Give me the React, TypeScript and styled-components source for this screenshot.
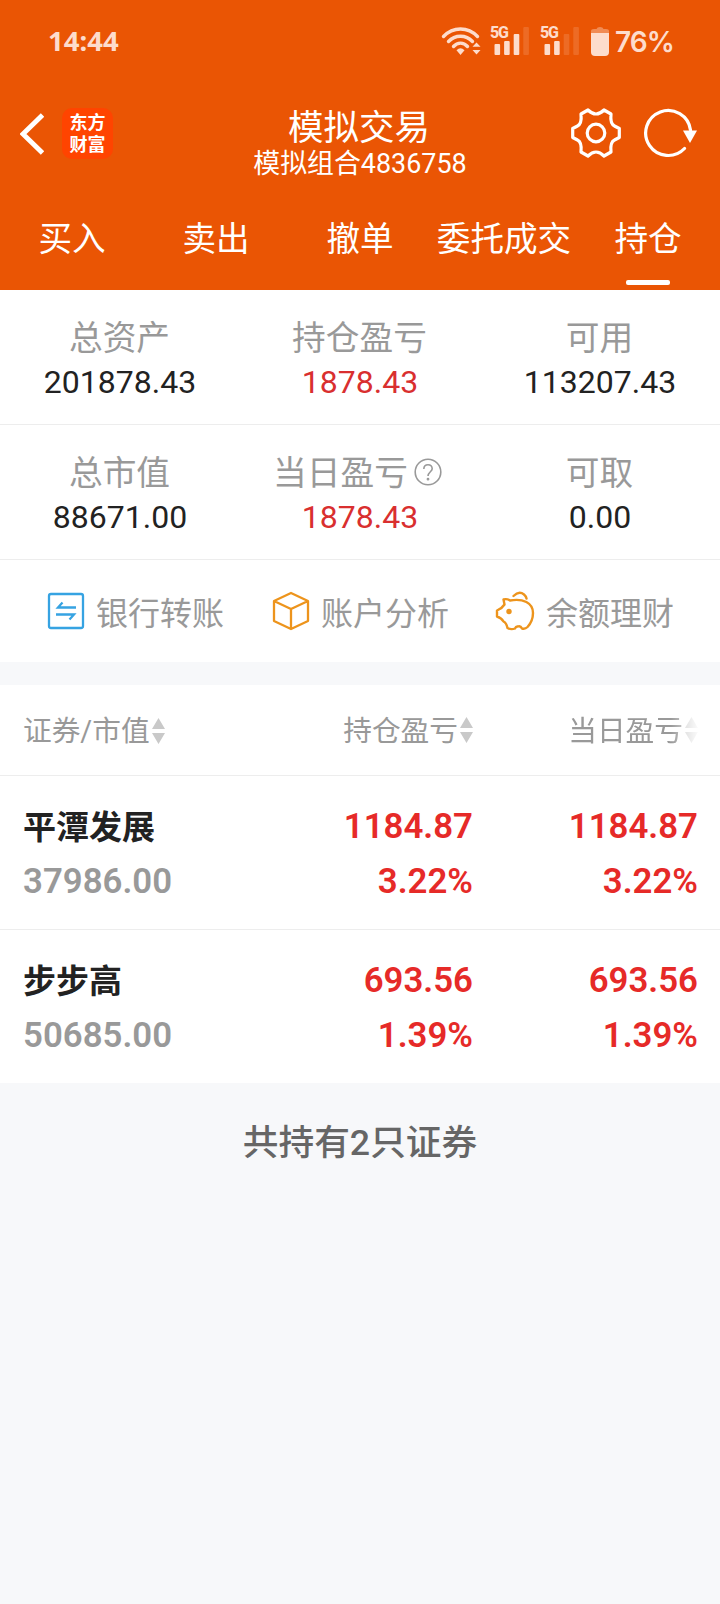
import React from "react";
import styled, { createGlobalStyle } from "styled-components";

const Global = createGlobalStyle`
  * { box-sizing: border-box; }
  body { margin: 0; background: #f7f8fa; font-family: Roboto, "Noto Sans CJK SC", sans-serif; }
`;

const ORANGE = "#ea5504";
const RED = "#e62a28";
const GREY = "#999999";
const PALE = "#fddccc";
const LINE = "#ededed";

const Screen = styled.div`
  width: 720px;
  min-height: 1604px;
  background: #f7f8fa;
  color: #222;
`;
const Top = styled.header`
  height: 290px;
  background: ${ORANGE};
  color: #fff;
  display: flex;
  flex-direction: column;
`;
const StatusBar = styled.div`
  height: 82px;
  padding: 0 47px 0 48px;
  display: flex;
  align-items: center;
  color: ${PALE};
`;
const Clock = styled.span`
  font: 700 27.5px/40px "Noto Sans", sans-serif;
  margin-right: auto;
`;
const Percent = styled.span`
  font: 600 28px/40px Inter, sans-serif;
  letter-spacing: -0.9px;
  width: 58px;
  padding-top: 2px;
  white-space: nowrap;
`;
const TitleBar = styled.div`
  height: 104px;
  display: grid;
  grid-template-columns: 200px 1fr 200px;
`;
const LeftTools = styled.div`
  display: flex;
  align-items: center;
  height: 103px;
  padding-left: 20px;
  gap: 18px;
`;
const RightTools = styled.div`
  display: flex;
  align-items: center;
  justify-content: flex-end;
  height: 102px;
  padding-right: 22px;
  gap: 23px;
`;
const Logo = styled.div`
  width: 51px;
  height: 51px;
  border-radius: 10px;
  background: #ff4400;
  display: flex;
  flex-direction: column;
  align-items: center;
  justify-content: center;
  font: 700 18px/22px Roboto, "Noto Sans CJK SC", sans-serif;
`;
const Titles = styled.div`
  display: flex;
  flex-direction: column;
  align-items: center;
  padding-top: 23px;
`;
const Title = styled.h1`
  margin: 0 2px 0 0;
  font-size: 35.5px;
  font-weight: 400;
  line-height: 46px;
`;
const Subtitle = styled.div`
  font-size: 26.9px;
  line-height: 26px;
`;
const Tabs = styled.nav`
  display: grid;
  grid-template-columns: repeat(5, 1fr);
  flex: 1;
`;
const Tab = styled.div<{ $on?: boolean }>`
  display: flex;
  flex-direction: column;
  align-items: center;
  padding-top: 30px;
  font-size: 33.6px;
  line-height: 48px;
  white-space: nowrap;
  &::after {
    content: "";
    width: 44px;
    height: 5px;
    border-radius: 2px;
    margin-top: 16px;
    background: ${(p) => (p.$on ? "#fff" : "transparent")};
  }
`;
const SummaryRow = styled.section`
  height: 135px;
  background: #fff;
  border-bottom: 1px solid ${LINE};
  display: grid;
  grid-template-columns: repeat(3, 1fr);
  padding-top: 27px;
`;
const Stat = styled.div`
  display: flex;
  flex-direction: column;
  align-items: center;
`;
const StatLabel = styled.div<{ $help?: boolean }>`
  display: flex;
  align-items: center;
  gap: 6px;
  font-size: 33.7px;
  line-height: 44px;
  margin-right: ${(p) => (p.$help ? 5 : 1)}px;
  color: ${GREY};
  svg { margin-bottom: 5px; }
`;
const StatValue = styled.div<{ $red?: boolean }>`
  font-size: 32px;
  line-height: 43px;
  color: ${(p) => (p.$red ? "#d92f2f" : "#222")};
`;
const Actions = styled.section`
  height: 102px;
  background: #fff;
  display: flex;
  padding-left: 47px;
`;
const Action = styled.div<{ $width: number }>`
  width: ${(p) => p.$width}px;
  height: 102px;
  display: flex;
  align-items: center;
  gap: 11px;
  font-size: 32px;
  color: ${GREY};
  white-space: nowrap;
  svg { flex: none; }
  span { line-height: 44px; padding-top: 5px; }
`;
const Table = styled.section`
  margin-top: 23px;
  background: #fff;
`;
const Row = styled.div`
  display: grid;
  grid-template-columns: 224px 226px 225px;
  padding-left: 23px;
`;
const HeadRow = styled(Row)`
  height: 91px;
  border-bottom: 1px solid ${LINE};
`;
const HeadCell = styled.div<{ $end?: boolean; $faded?: boolean }>`
  display: flex;
  align-items: center;
  justify-content: ${(p) => (p.$end ? "flex-end" : "flex-start")};
  gap: 2px;
  font-size: 28.7px;
  color: ${GREY};
  white-space: nowrap;
  span { line-height: 40px; padding-top: 2px; }
  svg { margin-top: ${(p) => (p.$end ? -1 : 1)}px; }
  ${(p) => p.$faded && "mask-image: linear-gradient(to right, #000 88%, transparent 101%);"}
`;
const HoldingRow = styled(Row)`
  height: 153px;
  padding-top: 23px;
  & + & { border-top: 1px solid ${LINE}; height: 154px; }
`;
const Cell = styled.div<{ $end?: boolean }>`
  display: flex;
  flex-direction: column;
  align-items: ${(p) => (p.$end ? "flex-end" : "flex-start")};
  font-size: 34.8px;
  font-weight: 600;
  line-height: 55px;
  color: ${(p) => (p.$end ? RED : GREY)};
`;
const Name = styled.div`
  padding-top: 1px;
  margin-bottom: -1px;
  font-size: 33px;
  font-weight: 700;
  color: #222;
`;
const Footer = styled.footer`
  padding-top: 36px;
  text-align: center;
  font-size: 35.7px;
  font-weight: 500;
  line-height: 48px;
  color: #666;
`;

const Wifi = () => (
  <svg width="40" height="30" viewBox="0 0 40 30" fill="none" stroke={PALE} strokeWidth="3.400" strokeLinecap="round">
    <path d="M2.500 10.500C12 .5 27 .5 36.500 10.500M7.500 15.500C14 8.500 25 8.500 31.500 15.500M12.500 20.500C16.500 16 22.500 16 26.500 20.500" />
    <path d="M15.500 24.200Q19.500 20.500 23.500 24.200L19.500 29Z" fill={PALE} stroke="none" />
    <path d="M31.500 20.800L35.500 16.500L39.500 20.800ZM31.500 24H39.500L35.500 28.500Z" fill={PALE} stroke="none" />
  </svg>
);

const FiveG = styled.span`
  position: absolute;
  left: 0;
  top: -2px;
  font: 800 16px/16px Roboto, sans-serif;
  letter-spacing: -1.2px;
`;
const SignalBox = styled.div`
  position: relative;
  width: 39px;
  height: 28px;
`;
const Signal = ({ level }: { level: number }) => (
  <SignalBox>
    <FiveG>5G</FiveG>
    <svg width="39" height="28" viewBox="0 0 39 28" fill={PALE}>
      {[17, 14, 7, 0].map((y, i) => (
        <rect key={y} x={4.500 + i * 9.600} y={y} width="5.600" height={28 - y} rx="1" opacity={i < level ? 1 : 0.17} />
      ))}
    </svg>
  </SignalBox>
);
const Battery = () => (
  <svg width="18" height="29" viewBox="0 0 18 29" fill={PALE}>
    <path opacity=".4" d="M0 6V4Q0 2 3 2H5.500Q6 0 9 0T12.500 2H15Q18 2 18 4V6Z" />
    <path d="M0 6H18V25Q18 29 14 29H4Q0 29 0 25Z" />
  </svg>
);
const Indicators = styled.div`
  display: flex;
  align-items: center;
  svg { display: block; }
`;
const Gap = styled.i<{ $w: number }>`
  width: ${(p) => p.$w}px;
`;

const Back = () => (
  <svg width="24" height="42" viewBox="0 0 24 42" fill="none" stroke="#fff" strokeWidth="4.800">
    <path d="M22.500 2L3 21L22.500 40" />
  </svg>
);
const Gear = () => (
  <svg width="50" height="50" viewBox="0 0 50 50" fill="none" stroke="#fff" strokeWidth="3.200" strokeLinejoin="round">
    <circle cx="25" cy="25" r="8.800" />
    <path d="M17 2L10 6Q11 16 6.500 18L1.700 20.500V29.500L6.500 32Q11 34 10 44L17 48Q21 44 25 44T33 48L40 44Q39 34 43.500 32L48.300 29.500V20.500L43.500 18Q39 16 40 6L33 2Q29 6 25 6T17 2Z" />
  </svg>
);
const Refresh = () => (
  <svg width="54" height="50" viewBox="0 0 54 50" fill="none" stroke="#fff" strokeWidth="3.200">
    <path d="M40.500 40.500A22.500 22.500 0 1 1 46.500 22" strokeLinecap="round" />
    <path d="M39 22.500H53L46 35Z" fill="#fff" stroke="none" />
  </svg>
);
const Help = () => (
  <svg width="28" height="28" viewBox="0 0 28 28" fill="none" stroke="#999" strokeWidth="1.600">
    <circle cx="14" cy="14" r="12.800" />
    <path d="M9.800 11Q10 6.800 14 6.800T18.200 10.800C18.200 13.500 14 14.200 14 18" />
    <circle cx="14" cy="21.200" r=".6" fill="#999" />
  </svg>
);
const Transfer = () => (
  <svg width="38" height="38" viewBox="0 0 38 38" fill="none" stroke="#36a3e2" strokeWidth="2.300">
    <rect x="2" y="2" width="34" height="34" rx="2" />
    <path d="M29 15.500H11L15.500 10.500M9 22.500H27L22.500 27.500" />
  </svg>
);
const Cube = () => (
  <svg width="38" height="40" viewBox="0 0 38 40" fill="none" stroke="#ed941c" strokeWidth="2.300" strokeLinejoin="round">
    <path d="M19 2L36 10V30L19 38L2 30V10ZM2 10L19 18L36 10M19 18V38" />
  </svg>
);
const Pig = () => (
  <svg width="40" height="40" viewBox="0 0 40 40" fill="none" stroke="#ed941c" strokeWidth="2.400" strokeLinejoin="round" strokeLinecap="round">
    <path d="M8.500 8.500Q12 7.500 15 9.500C28 7 38 12 38 22Q38 30 32.500 36Q30 38.500 27 37.500Q25.500 34.500 23 35.500Q21 35 20 37.500Q16 39 12.500 37Q11.500 32 8.500 30.500Q6.500 27 2 25.500V19.500Q7 17.500 9.500 13.500Z" />
    <path d="M18.500 5Q24 -.5 29 3.500Q31 5.200 31.500 7.500" />
    <circle cx="14" cy="20.500" r="2.700" fill="#ed941c" stroke="none" />
  </svg>
);
const Sort = () => (
  <svg width="13" height="26" viewBox="0 0 13 26" fill="#c9c9c9">
    <path d="M0 11L6.500 0L13 11ZM0 15H13L6.500 26Z" />
  </svg>
);

const summary = [
  [["总资产", "201878.43"], ["持仓盈亏", "1878.43"], ["可用", "113207.43"]],
  [["总市值", "88671.00"], ["当日盈亏", "1878.43"], ["可取", "0.00"]],
];
const holdings = [
  { name: "平潭发展", value: "37986.00", gain: "1184.87", rate: "3.22%" },
  { name: "步步高", value: "50685.00", gain: "693.56", rate: "1.39%" },
];

export default function App() {
  return (
    <Screen>
      <Global />
      <Top>
        <StatusBar>
          <Clock>14:44</Clock>
          <Indicators>
            <Wifi />
            <Gap $w={9} />
            <Signal level={3} />
            <Gap $w={11} />
            <Signal level={2} />
            <Gap $w={12} />
            <Battery />
            <Gap $w={6} />
            <Percent>76%</Percent>
          </Indicators>
        </StatusBar>
        <TitleBar>
          <LeftTools>
            <Back />
            <Logo><span>东方</span><span>财富</span></Logo>
          </LeftTools>
          <Titles>
            <Title>模拟交易</Title>
            <Subtitle>模拟组合4836758</Subtitle>
          </Titles>
          <RightTools>
            <Gear />
            <Refresh />
          </RightTools>
        </TitleBar>
        <Tabs>
          {["买入", "卖出", "撤单", "委托成交", "持仓"].map((t) => (
            <Tab key={t} $on={t === "持仓"}>{t}</Tab>
          ))}
        </Tabs>
      </Top>
      {summary.map((row, i) => (
        <SummaryRow key={i}>
          {row.map(([label, value]) => (
            <Stat key={label}>
              <StatLabel $help={label === "当日盈亏"}>{label}{label === "当日盈亏" && <Help />}</StatLabel>
              <StatValue $red={label.endsWith("盈亏")}>{value}</StatValue>
            </Stat>
          ))}
        </SummaryRow>
      ))}
      <Actions>
        <Action $width={225}><Transfer /><span>银行转账</span></Action>
        <Action $width={223}><Cube /><span>账户分析</span></Action>
        <Action $width={200}><Pig /><span>余额理财</span></Action>
      </Actions>
      <Table>
        <HeadRow>
          <HeadCell><span>证券/市值</span><Sort /></HeadCell>
          <HeadCell $end><span>持仓盈亏</span><Sort /></HeadCell>
          <HeadCell $end $faded><span>当日盈亏</span><Sort /></HeadCell>
        </HeadRow>
        {holdings.map((h) => (
          <HoldingRow key={h.name}>
            <Cell><Name>{h.name}</Name><span>{h.value}</span></Cell>
            <Cell $end><span>{h.gain}</span><span>{h.rate}</span></Cell>
            <Cell $end><span>{h.gain}</span><span>{h.rate}</span></Cell>
          </HoldingRow>
        ))}
      </Table>
      <Footer>共持有2只证券</Footer>
    </Screen>
  );
}
